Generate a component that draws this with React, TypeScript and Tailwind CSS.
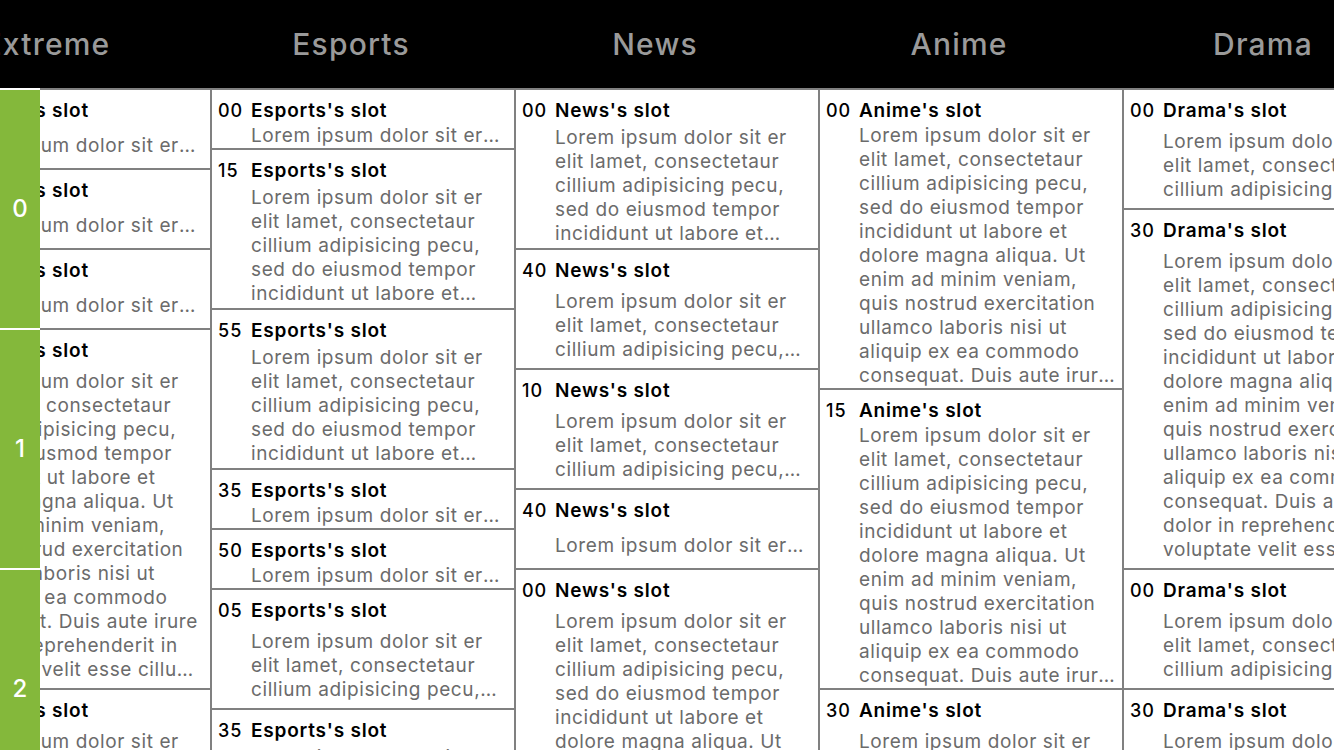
import React from "react";

const LOREM =
  "Lorem ipsum dolor sit er elit lamet, consectetaur cillium adipisicing pecu, sed do eiusmod tempor incididunt ut labore et dolore magna aliqua. Ut enim ad minim veniam, quis nostrud exercitation ullamco laboris nisi ut aliquip ex ea commodo consequat. Duis aute irure dolor in reprehenderit in voluptate velit esse cillum dolore eu fugiat nulla pariatur. Excepteur sint occaecat cupidatat non proident, sunt in culpa qui officia deserunt mollit anim id est laborum.";

const CLAMP: Record<number, string> = {
  1: "line-clamp-1",
  2: "line-clamp-2",
  3: "line-clamp-3",
  4: "line-clamp-4",
  5: "line-clamp-5",
  6: "line-clamp-6",
  7: "line-clamp-7",
  8: "line-clamp-8",
  9: "line-clamp-9",
  10: "line-clamp-10",
  11: "line-clamp-11",
  12: "line-clamp-12",
  13: "line-clamp-13",
  14: "line-clamp-14",
  15: "line-clamp-15",
  16: "line-clamp-16",
};

type Slot = [string, number];

const channels: { name: string; slots: Slot[] }[] = [
  {
    name: "Extreme",
    slots: [
      ["00", 20],
      ["20", 20],
      ["40", 20],
      ["00", 90],
      ["30", 60],
    ],
  },
  {
    name: "Esports",
    slots: [
      ["00", 15],
      ["15", 40],
      ["55", 40],
      ["35", 15],
      ["50", 15],
      ["05", 30],
      ["35", 40],
    ],
  },
  {
    name: "News",
    slots: [
      ["00", 40],
      ["40", 30],
      ["10", 30],
      ["40", 20],
      ["00", 60],
    ],
  },
  {
    name: "Anime",
    slots: [
      ["00", 75],
      ["15", 75],
      ["30", 60],
    ],
  },
  {
    name: "Drama",
    slots: [
      ["00", 30],
      ["30", 90],
      ["00", 30],
      ["30", 60],
    ],
  },
];

function Cell({ name, label, minutes }: { name: string; label: string; minutes: number }) {
  const h = minutes * 4;
  const lines = Math.max(1, Math.min(16, Math.floor((h - 2 - 33) / 24)));
  return (
    <div
      className="shrink-0 border-b-2 border-[#808080] bg-white flex pl-[6px] pr-[6px] pt-[9px]"
      style={{ height: h }}
    >
      <div className="w-[33px] shrink-0 text-[18px] leading-[24px] font-medium tracking-[1px] text-black">
        {label}
      </div>
      <div className="flex-1 min-w-0 flex flex-col">
        <div className="text-[19px] leading-[24px] font-semibold tracking-[0.8px] text-black truncate">
          {name}'s slot
        </div>
        <div className="flex-1 flex items-center min-h-0">
          <p className={`text-[19px] leading-[24px] tracking-[0.6px] text-[#6b6b6b] ${CLAMP[lines]}`}>
            {LOREM}
          </p>
        </div>
      </div>
    </div>
  );
}

export default function App() {
  return (
    <div
      className="w-[1334px] h-[750px] overflow-hidden bg-white flex flex-col"
      style={{ fontFamily: "Inter, 'Noto Sans', sans-serif" }}
    >
      <div className="h-[88px] shrink-0 bg-black flex overflow-hidden">
        <div className="flex ml-[-105px]">
          {channels.map((c) => (
            <div
              key={c.name}
              className="w-[304px] shrink-0 flex items-center justify-center text-[30px] font-medium tracking-[1.2px] text-[#9a9a9a]"
            >
              {c.name}
            </div>
          ))}
        </div>
      </div>
      <div className="relative flex-1 overflow-hidden">
        <div className="flex ml-[-92px]">
          {channels.map((c) => (
            <div
              key={c.name}
              className="w-[304px] shrink-0 border-t-2 border-r-2 border-[#808080] flex flex-col h-[700px] overflow-hidden"
            >
              {c.slots.map(([label, m], i) => (
                <Cell key={i} name={c.name} label={label} minutes={m} />
              ))}
            </div>
          ))}
        </div>
        <div className="absolute left-0 top-0 w-[40px] flex flex-col">
          {["0", "1", "2"].map((t) => (
            <div
              key={t}
              className="h-[240px] shrink-0 border-t-2 border-white bg-[#84b83b] flex items-center justify-center text-[24px] font-medium text-white"
            >
              {t}
            </div>
          ))}
        </div>
      </div>
    </div>
  );
}
